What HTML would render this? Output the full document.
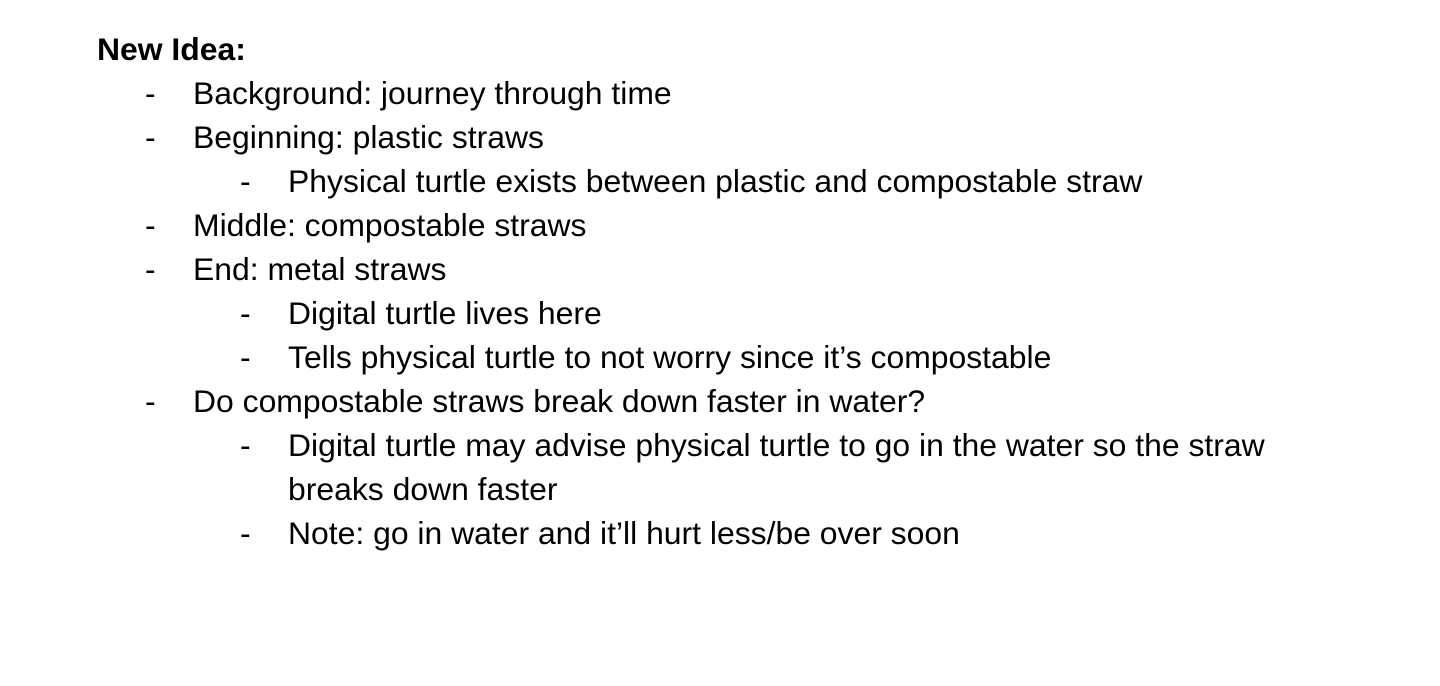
<!DOCTYPE html>
<html><head><meta charset="utf-8"><style>
body{margin:0;width:1440px;height:686px;background:#fff;font-family:"Liberation Sans",Arial,sans-serif;font-size:31.9px;color:#000;overflow:hidden}
.l{position:absolute;left:0;height:44px;line-height:44px;white-space:nowrap}
.d{position:absolute}
</style></head><body>
<div class="l" style="top:27px;left:97px;font-weight:bold">New Idea:</div>
<div class="l" style="top:71px"><span class="d" style="left:145px">-</span><span class="d" style="left:193px">Background: journey through time</span></div>
<div class="l" style="top:115px"><span class="d" style="left:145px">-</span><span class="d" style="left:193px">Beginning: plastic straws</span></div>
<div class="l" style="top:159px"><span class="d" style="left:240px">-</span><span class="d" style="left:288px">Physical turtle exists between plastic and compostable straw</span></div>
<div class="l" style="top:203px"><span class="d" style="left:145px">-</span><span class="d" style="left:193px">Middle: compostable straws</span></div>
<div class="l" style="top:247px"><span class="d" style="left:145px">-</span><span class="d" style="left:193px">End: metal straws</span></div>
<div class="l" style="top:291px"><span class="d" style="left:240px">-</span><span class="d" style="left:288px">Digital turtle lives here</span></div>
<div class="l" style="top:335px"><span class="d" style="left:240px">-</span><span class="d" style="left:288px">Tells physical turtle to not worry since it’s compostable</span></div>
<div class="l" style="top:379px"><span class="d" style="left:145px">-</span><span class="d" style="left:193px">Do compostable straws break down faster in water?</span></div>
<div class="l" style="top:423px"><span class="d" style="left:240px">-</span><span class="d" style="left:288px">Digital turtle may advise physical turtle to go in the water so the straw</span></div>
<div class="l" style="top:467px"><span class="d" style="left:288px">breaks down faster</span></div>
<div class="l" style="top:511px"><span class="d" style="left:240px">-</span><span class="d" style="left:288px">Note: go in water and it’ll hurt less/be over soon</span></div>
</body></html>
